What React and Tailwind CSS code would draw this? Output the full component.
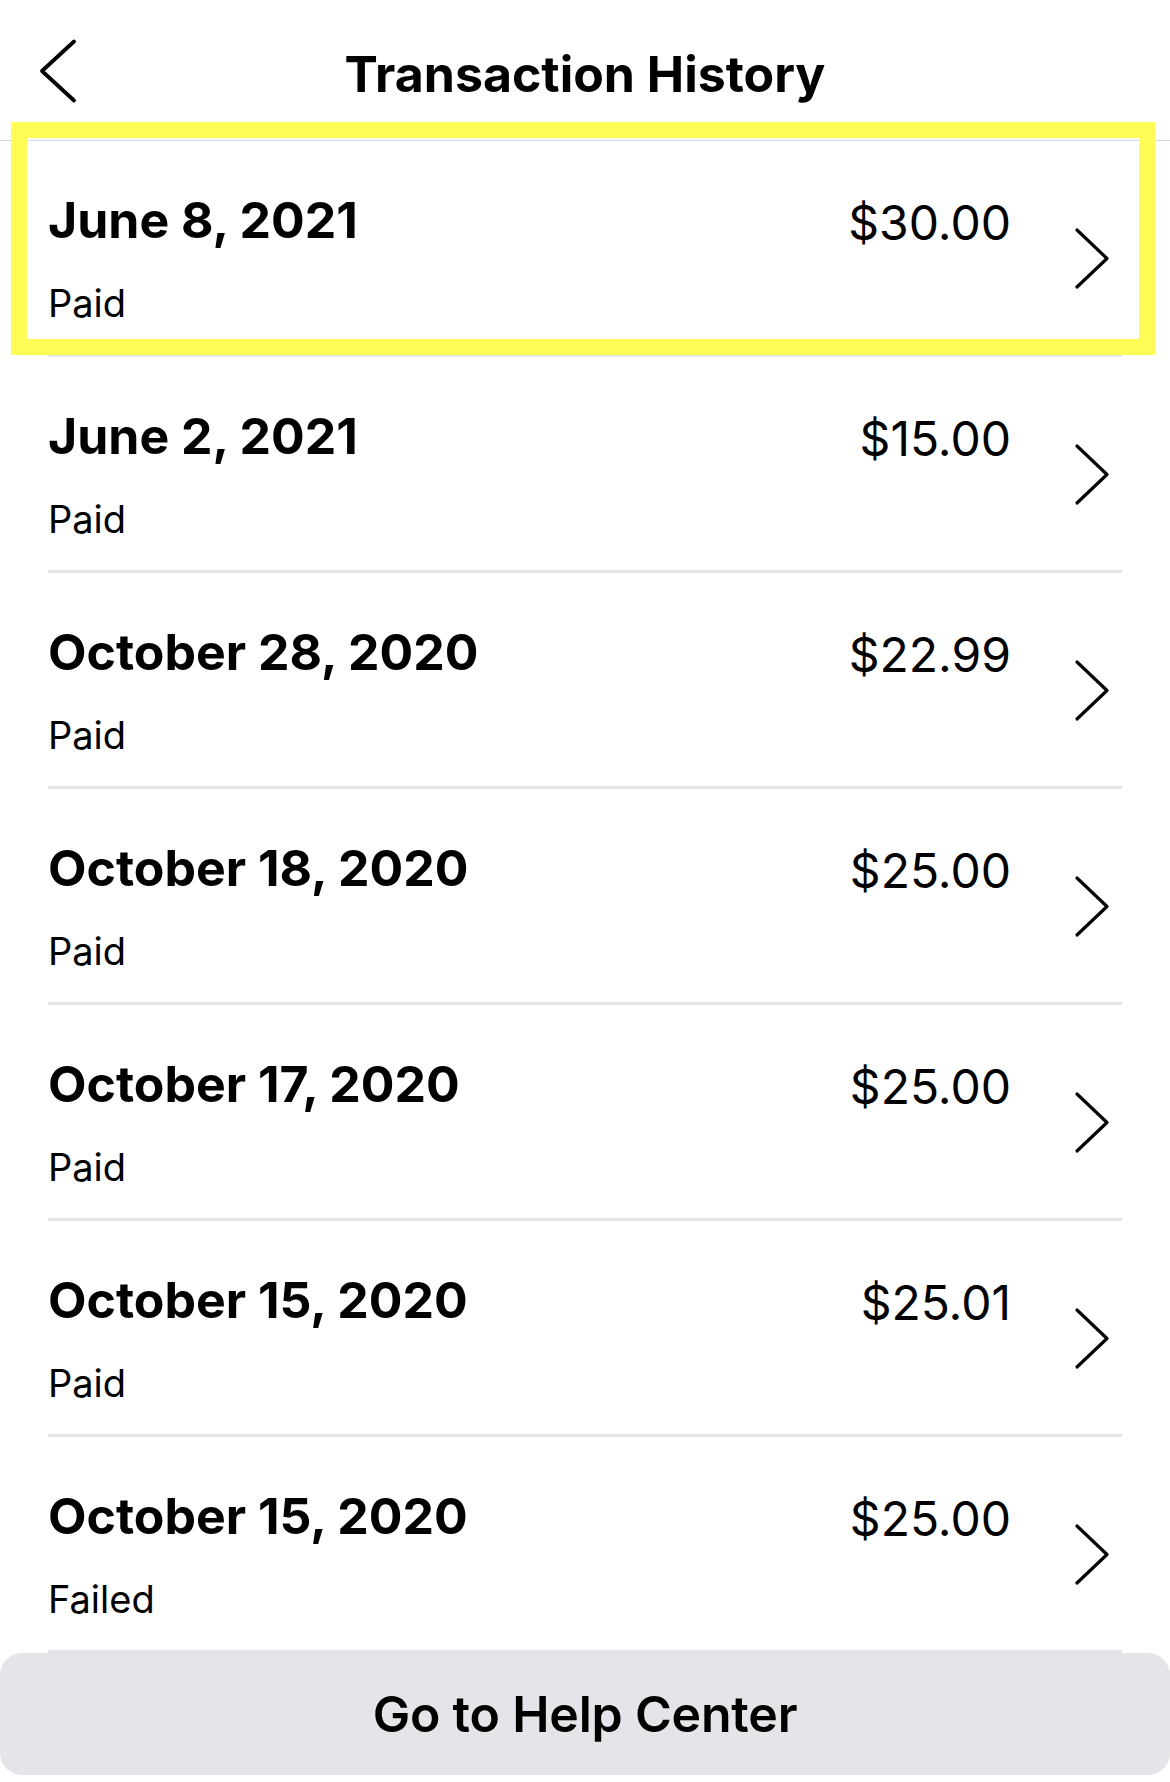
import React from "react";

const rows = [
  { date: "June 8, 2021", amount: "$30.00", status: "Paid" },
  { date: "June 2, 2021", amount: "$15.00", status: "Paid" },
  { date: "October 28, 2020", amount: "$22.99", status: "Paid" },
  { date: "October 18, 2020", amount: "$25.00", status: "Paid" },
  { date: "October 17, 2020", amount: "$25.00", status: "Paid" },
  { date: "October 15, 2020", amount: "$25.01", status: "Paid" },
  { date: "October 15, 2020", amount: "$25.00", status: "Failed" },
];

function ChevronRight() {
  return (
    <svg width="36" height="63" viewBox="0 0 36 63" fill="none">
      <polyline
        points="3,3 33,31.5 3,60"
        stroke="#000"
        strokeWidth="3.2"
        strokeLinecap="round"
        strokeLinejoin="round"
      />
    </svg>
  );
}

function ChevronLeft() {
  return (
    <svg width="40" height="66" viewBox="0 0 40 66" fill="none">
      <polyline
        points="36,3.5 4,33 36,62.5"
        stroke="#000"
        strokeWidth="3.8"
        strokeLinecap="round"
        strokeLinejoin="round"
      />
    </svg>
  );
}

export default function App() {
  return (
    <div
      className="relative w-[1170px] h-[1782px] bg-white text-black overflow-hidden"
      style={{ fontFamily: "Inter, 'Liberation Sans', sans-serif" }}
    >
      <div className="h-[141px] border-b border-[#d9d9de] grid grid-cols-[1fr_auto_1fr] items-start">
        <div className="pl-[38px] pt-[38px]">
          <ChevronLeft />
        </div>
        <h1 className="pt-[45px] text-[50px] leading-[58px] font-bold">
          Transaction History
        </h1>
        <div />
      </div>

      <div className="flex flex-col">
        {rows.map((r, i) => (
          <div
            key={i}
            className="mx-[48px] h-[216px] border-b-[3px] border-[#e3e3e8] flex items-start"
          >
            <div className="flex-1 flex flex-col pt-[50px]">
              <div className="text-[50px] leading-[58px] font-bold">
                {r.date}
              </div>
              <div className="mt-[31px] text-[38px] leading-[46px] font-normal">
                {r.status}
              </div>
            </div>
            <div className="pt-[53px] text-[48px] leading-[58px] font-normal">
              {r.amount}
            </div>
            <div className="ml-[63px] mr-[12px] mt-[86px]">
              <ChevronRight />
            </div>
          </div>
        ))}
      </div>

      <div className="h-[122px] bg-[#e4e4e9] rounded-[22px] flex items-center justify-center">
        <span className="text-[50px] leading-[58px] font-semibold tracking-[-0.2px]">
          Go to Help Center
        </span>
      </div>

      <div className="absolute left-[11px] top-[122px] w-[1144px] h-[233px] border-[16px] border-[#fffc55] pointer-events-none" />
    </div>
  );
}
